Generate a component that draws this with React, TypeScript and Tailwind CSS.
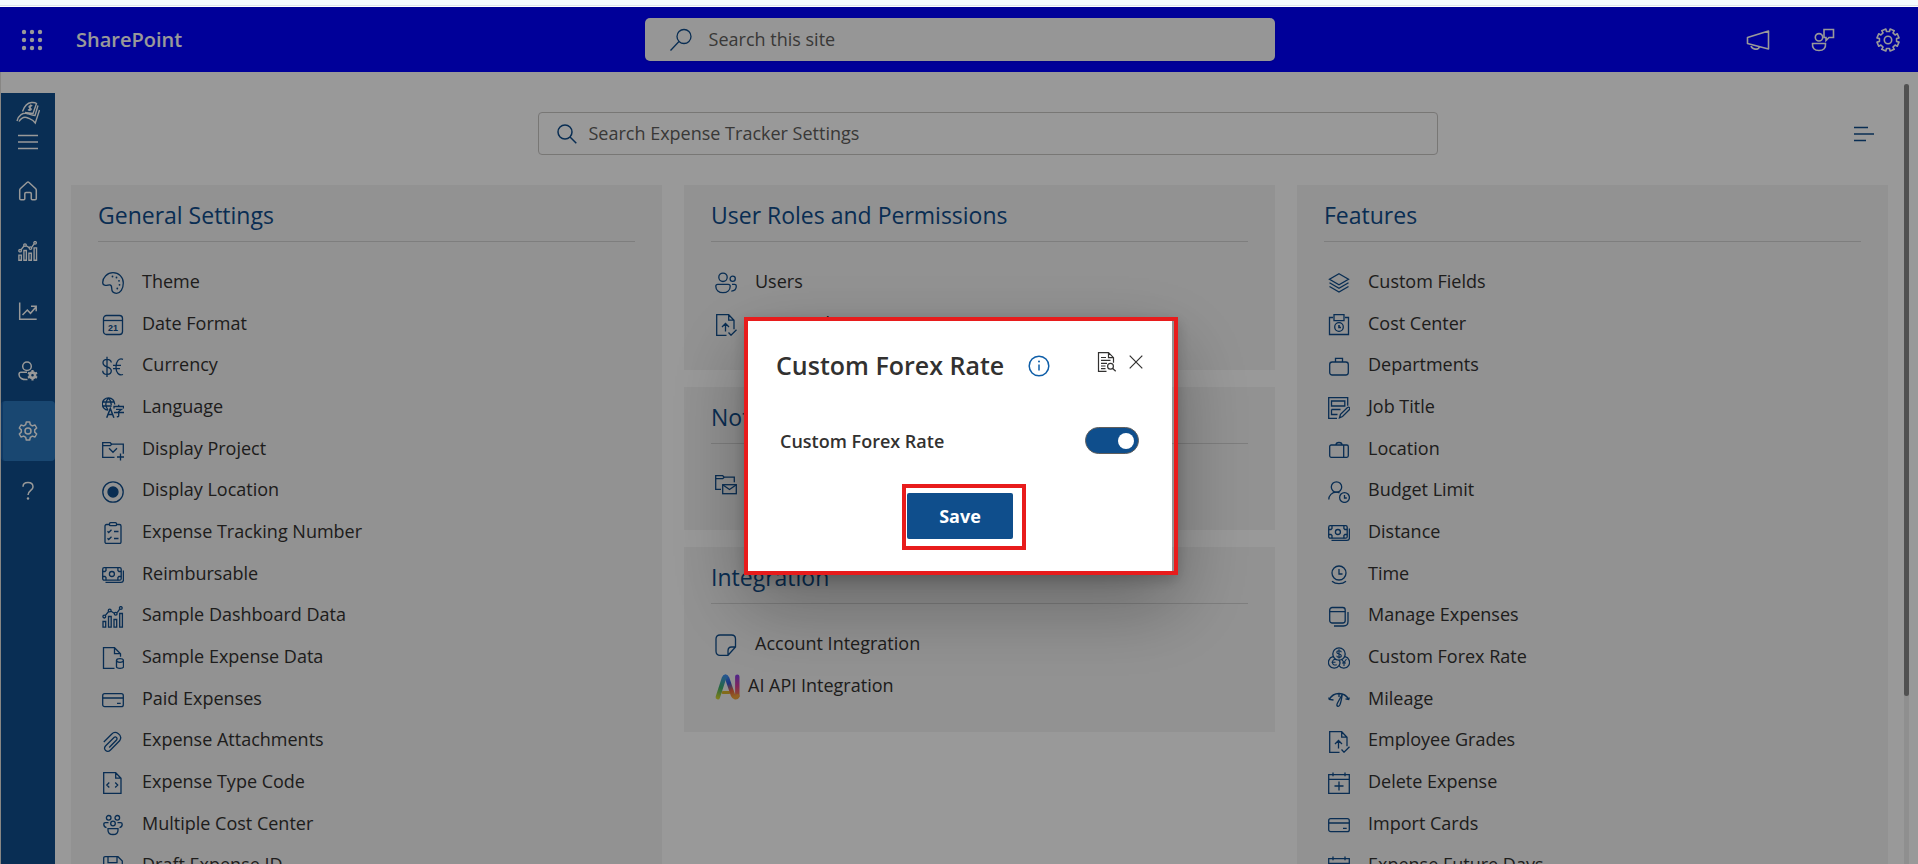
import React, { useState } from 'react';

type IconProps = { children: React.ReactNode; size?: number; className?: string; width?: number };

function Svg({ children, size = 22, className = '', width = 1.3 }: IconProps) {
  return (
    <svg
      aria-hidden="true"
      width={size}
      height={size}
      viewBox={`0 0 ${size} ${size}`}
      fill="none"
      stroke="currentColor"
      strokeWidth={width}
      className={`shrink-0 ${className}`}
    >
      {children}
    </svg>
  );
}

const dot = (cx: number, cy: number, r = 0.9) => <circle key={`${cx}-${cy}`} cx={cx} cy={cy} r={r} fill="currentColor" stroke="none" />;

const palette = (
  <Svg>
    <path d="M11 .7C16.800 .7 21.300 5 21.300 11s-3 10.300-6.800 10.300c-3 0-4.800-2-4.800-5 0-2.300-.6-3.500-2-3.500-1.500 0-2.700.9-4.500.6C1.500 13.100.7 12.300.7 10.500.7 5.500 5.300.7 11 .7Z" />
    {[dot(10.500, 4.500), dot(14.500, 5.500), dot(17, 8.800), dot(17.500, 12.800), dot(15.300, 16.500)]}
  </Svg>
);
const calendar21 = (
  <Svg>
    <rect x="1.500" y="1.500" width="19" height="19" rx="3" />
    <path d="M1.500 6.500h19" />
    <text x="11" y="16.500" textAnchor="middle" fontSize="9" fontWeight="700" fill="currentColor" stroke="none" className="font-['Liberation_Sans',sans-serif]">21</text>
  </Svg>
);
const currency = (
  <Svg>
    <path d="M9.300 6.500C9 4.300 7.300 3.300 5 3.300S1 4.500 1 6.700c0 2.500 1.800 3.400 4 4.100s4.300 1.600 4.300 4c0 2.300-1.800 3.600-4.300 3.600S.8 17.200.7 14.700M5 .7v20.300" />
    <path d="M21 3.300C17 1.800 14 5 14 11s3 9 7 7.500M11 9.300h8M11 12.700h7" />
  </Svg>
);
const language = (
  <Svg>
    <path d="M12.700 7.500V7A6.200 6.200 0 1 0 6 13.200M.5 5h12M.7 9h9M6.500 1C3 4.500 3 9.500 6 13M6.500 1c2 2 2.800 4.200 2.700 7" />
    <path d="M4.700 20.700 8.300 11.500l3.600 9.200M6 17.500h4.700" strokeWidth="1.500" />
    <path d="M12 11.500V9.500h9.500v2M14 12.300h5.500l-2.800 2.200v4.300c0 .9-.6 1-1.900.9M12 15.500h10M16.700 7.700v1.800" />
  </Svg>
);
const folderCheck = (
  <Svg>
    <path d="M12.500 18.300H.7V3.700h7.500l1.500 1.500h11.600v9.500M.7 6.700h7.500l1.500-1.500M7 9.300l4 4 4-4M18.500 14.500v7M15 18h7" />
  </Svg>
);
const radio = (
  <Svg>
    <circle cx="11" cy="11" r="10.200" />
    <circle cx="11" cy="11" r="5" fill="currentColor" />
  </Svg>
);
const checklist = (
  <Svg>
    <rect x="3" y="2.500" width="16" height="19" rx="1.500" />
    <rect x="7.500" y=".7" width="7" height="3" rx="1" fill="#f3f3f3" />
    <path d="m5.500 9.300 1.200 1.200 2.800-2.700M5.500 16.300l1.200 1.200 2.800-2.700M12 9.500h4.500M12 16.500h4.500" />
  </Svg>
);
const money = (
  <Svg>
    <rect x=".7" y="3.700" width="18.500" height="12.500" rx="1.500" />
    <circle cx="9.900" cy="10" r="2.500" />
    <path d="M.7 7.500h2.300l1-1V3.700M.7 12.500h2.300l1 1v2.700M19.200 7.500h-2.300l-1-1V3.700M19.200 12.500h-2.300l-1 1v2.700M21.400 6.500v9.500c0 1.500-.9 2.400-2.400 2.400H3.500" />
  </Svg>
);
const barPaths = (
  <>
    <path d="M1 15.500h2.700v5.700H1zM6.500 10.500h2.700v10.700H6.500zM12 13.500h2.700v7.700H12zM17.700 7.500h2.700v13.700h-2.700z" />
    <path d="m3.200 9.700 3.400-4.200M9 5.200l3.300 2M15.200 6.700l2.500-3.500" />
    <circle cx="2.300" cy="10.600" r="1.400" />
    <circle cx="7.700" cy="4.500" r="1.400" />
    <circle cx="13.700" cy="7.800" r="1.400" />
    <circle cx="18.800" cy="2" r="1.400" />
  </>
);
const bars = <Svg>{barPaths}</Svg>;
const docData = (
  <Svg>
    <path d="M12.500 21.300H1.500V.7h11l6 6v3M12.500.7v6h6" />
    <path d="M14.500 13.500v6.300c0 2 7 2 7 0v-6.300" />
    <ellipse cx="18" cy="13.500" rx="3.500" ry="1.800" />
  </Svg>
);
const card = (
  <Svg>
    <rect x=".7" y="4.700" width="20.600" height="13" rx="2" />
    <path d="M.7 9h20.600M15 14.300h3.700" />
  </Svg>
);
const clip = (
  <Svg>
    <path d="m1.800 11 8-8c3.700-4 11.300 1 8 6.500L8.500 19c-3.300 3.300-8-.5-5-4L12 6.500c1.700-1.500 4 .5 2.500 2.500l-7.300 7.500" />
  </Svg>
);
const docCode = (
  <Svg>
    <path d="M1.700.7h12l5.300 5.500v15.100H1.700zM13.700.7v5.500H19M7.300 10.500 4.800 13l2.500 2.500M13.200 10.500l2.500 2.500-2.500 2.500" />
  </Svg>
);
const team = (
  <Svg>
    <circle cx="6.700" cy="3.800" r="2.300" />
    <circle cx="15.300" cy="3.800" r="2.300" />
    <circle cx="11" cy="9.500" r="2.300" />
    <path d="M6 14.700h10v1.500c0 3-2 4.300-5 4.300s-5-1.300-5-4.300zM6.500 8.700h-3c-1.200 0-1.700.5-1.700 1.500 0 1.800 1 3 2.700 3.400M15.500 8.700h3c1.200 0 1.700.5 1.700 1.500 0 1.800-1 3-2.700 3.400" />
  </Svg>
);
const floppy = (
  <Svg>
    <path d="M1.700 2.200c0-1 .5-1.500 1.500-1.500H16l4.300 4.300v15.300H1.700zM6 .7v6h9v-6M5.500 20.300V12.500h11v7.800" />
  </Svg>
);
const people = (
  <Svg>
    <circle cx="8" cy="5.300" r="4.200" />
    <circle cx="17.700" cy="6.800" r="2.600" />
    <path d="M.8 14.300c0-1.200.8-2 2-2h10.400c1.200 0 2 .8 2 2 0 4-3 6.400-7.200 6.400S.8 18.300.8 14.300ZM17 12.300h2.500c1.100 0 1.800.7 1.800 1.800 0 3.200-2 5-5 5" />
  </Svg>
);
const docUp = (
  <Svg>
    <path d="M11.500 21.300H1.700V.7h12l5.300 5.500v9M13.700.7v5.500H19M10.500 17.500v-8M7 13l3.500-3.500L14 13M13.500 18.500l2.500 2.700 5.500-5.500" />
  </Svg>
);
const folderMail = (
  <Svg>
    <path d="M6 15.300H.7V1.700h7l1.500 1.500h10.100v5M.7 4.700h7l1.500-1.500" />
    <rect x="7.700" y="10.700" width="13.600" height="9" />
    <path d="m8 11 6.500 4.500L21 11" />
  </Svg>
);
const note = (
  <Svg>
    <path d="M13 21.300H5c-2.500 0-4-1.500-4-4V5c0-2.500 1.500-4 4-4h11.500c2.500 0 4 1.500 4 4v8L13 21.300Zm0 0V17c0-2.500 1-4 3.500-4h4" />
  </Svg>
);
const aiLogo = (
  <svg aria-hidden="true" width="25" height="26" viewBox="0 0 25 26" fill="none" strokeLinecap="round" strokeLinejoin="round" strokeWidth="4.400" className="shrink-0">
    <defs>
      <linearGradient id="ai-left" x1="9" y1="1" x2="2" y2="24" gradientUnits="userSpaceOnUse">
        <stop stopColor="#3d8ff2" />
        <stop offset=".55" stopColor="#3fae6b" />
        <stop offset="1" stopColor="#cfd32e" />
      </linearGradient>
      <linearGradient id="ai-mid" x1="10" y1="2" x2="19" y2="23" gradientUnits="userSpaceOnUse">
        <stop stopColor="#3d8ff2" />
        <stop offset=".35" stopColor="#3159d8" />
        <stop offset=".7" stopColor="#e8643c" />
        <stop offset="1" stopColor="#f2a33a" />
      </linearGradient>
      <linearGradient id="ai-right" x1="22" y1="2" x2="22" y2="23" gradientUnits="userSpaceOnUse">
        <stop stopColor="#8a3fe0" />
        <stop offset=".5" stopColor="#d93f94" />
        <stop offset="1" stopColor="#f28a3a" />
      </linearGradient>
    </defs>
    <path d="M8 18.500h6" stroke="#d9b52c" strokeWidth="3" />
    <path d="M22.300 2.700v19.500" stroke="url(#ai-right)" />
    <path d="M10.500 2.700c.8 0 1.300.6 1.600 1.300L18 21.300c.8 2.200 3.600 2.700 4.300.7" stroke="url(#ai-mid)" />
    <path d="M2.800 23.200 9 4c.3-.8.8-1.300 1.500-1.300" stroke="url(#ai-left)" />
  </svg>
);
const layers = (
  <Svg>
    <path d="m11 1.700 9.500 5.500-9.500 5.500-9.500-5.500zM1.500 10.700l9.500 5.500 9.500-5.500M1.500 14.500 11 20l9.500-5.500" />
  </Svg>
);
const badge = (
  <Svg>
    <path d="M5 3.500H1.500v17h19v-17H17M6 .7h10v6H6z" />
    <circle cx="11" cy="13" r="4.300" />
    <path d="M11 11v2.500h2" strokeWidth="1.600" />
  </Svg>
);
const briefcase = (
  <Svg>
    <rect x="1.700" y="6" width="18.600" height="13" rx="2.500" />
    <path d="M7.500 6V2.300h7V6" />
  </Svg>
);
const formEdit = (
  <Svg>
    <path d="M9 21.300H.7V.7h19v8M3.500 4h13.300v5H3.500zM3.500 12.500h9M3.500 12.500v5h6" />
    <path d="m11.500 20.800 1-3.500 7-6.800c1.500-1 3 .8 2 2l-7 7z" />
  </Svg>
);
const suitcase = (
  <Svg>
    <rect x="1.700" y="6" width="18.600" height="12.300" rx="1.500" />
    <path d="M8 6c0-2 .8-2.500 3-2.500S14 4 14 6M15.700 6v12.300" />
  </Svg>
);
const personClock = (
  <Svg>
    <circle cx="8.500" cy="6" r="5.200" />
    <path d="M.8 18.500c0-4 3-7.300 7.700-7.300 1.300 0 2.200.2 3 .6" />
    <circle cx="16.500" cy="16.500" r="4.900" />
    <path d="M16.500 14v3h2.300" />
  </Svg>
);
const clock = (
  <Svg>
    <circle cx="11" cy="9" r="7" />
    <path d="M11 5v5h3.500M4 17.300c3.800 3.200 10.200 3.200 14 0" />
  </Svg>
);
const windows = (
  <Svg>
    <rect x="1.700" y="1.500" width="15.500" height="15.500" rx="2.500" />
    <path d="M1.700 5.700h15.500M20 6v9.500c0 3-1.500 4.500-4.500 4.500H6" />
  </Svg>
);
const coins = (
  <Svg>
    <circle cx="11" cy="7" r="6.200" />
    <path d="M5 9.700a5.800 5.800 0 1 0 6 9 5.800 5.800 0 1 0 6-9M11 18.700c1.200-1.700 1.200-4 0-5.700" />
    <path d="M13.200 5.300c0-1-.8-1.600-2.200-1.600s-2.200.6-2.200 1.600 1 1.500 2.200 1.700 2.300.7 2.300 1.800-1 1.600-2.300 1.600-2.200-.6-2.300-1.600M11 2.300v9.300M8.800 12.700c-3-1-4.300.5-4.300 2.500s1.300 3.500 4.300 2.500M3.500 15.200h4M13.500 12l2.500 3.500 2.500-3.500M16 15.500V19M14 16h4" strokeWidth="1.100" />
  </Svg>
);
const gauge = (
  <Svg>
    <path d="M1.300 10.500C5.500 2.500 16.500 2.500 20.700 10.500M.7 8.500l.6 2 4.200.5M21.300 8.500l-.6 2-3.200-.7M11 4.700V8M14.300 5.200 9.500 14c-1.800 3.500 1 4.200 2.300 2 1-2 1.800-6 2.500-10.800" />
  </Svg>
);
const calendarPlus = (
  <Svg>
    <path d="M.7 2.700h20.600v18.600H.7zM.7 7.300h20.600M5 .5v3.700M17 .5v3.700M11 9.500v9M6.500 14h9" />
  </Svg>
);

const gearPath = (size: number) => {
  const c = size / 2;
  const teeth = 8;
  const outer = size / 2 - 0.8;
  const inner = outer - 2.5;
  const points: string[] = [];
  for (let i = 0; i < teeth; i += 1) {
    const mid = ((i + 0.5) / teeth) * Math.PI * 2;
    [
      [inner, -0.22],
      [outer, -0.2],
      [outer, 0.2],
      [inner, 0.22],
    ].forEach(([r, a]) => points.push(`${(c + r * Math.cos(mid + a)).toFixed(2)} ${(c + r * Math.sin(mid + a)).toFixed(2)}`));
  }
  return `M${points.join('L')}Z`;
};

const home = (
  <Svg size={20} width={1.500}>
    <path d="M1.700 9.300c0-.8.3-1.300.8-1.800l6.500-6c.7-.6 1.300-.6 2 0l6.500 6c.5.500.8 1 .8 1.800v8.200c0 .8-.5 1.300-1.300 1.300h-2.700c-.7 0-1-.4-1-1v-5c0-.8-.4-1.200-1.200-1.200H8c-.8 0-1.200.4-1.200 1.200v5c0 .6-.3 1-1 1H3c-.8 0-1.300-.5-1.300-1.300z" />
  </Svg>
);
const trend = (
  <Svg size={20} width={1.500}>
    <path d="M1.700 1.500v16.700h17M4.500 14l4.800-5 3.200 3.300 5.700-6.500M13 5.200h5.200v5" />
  </Svg>
);
const personGear = (
  <Svg size={20} width={1.500}>
    <circle cx="9" cy="5.200" r="4.300" />
    <path d="M9.500 18.500C4.500 19 1 17 1 13.500c0-1.500.8-2.200 2-2.200h6" />
    <circle cx="14.500" cy="14.200" r="2.600" strokeWidth="2.600" />
    <path d="M14.500 9v2M14.500 17.500v2M10 11.600l1.700 1M17.300 15.800l1.700 1M19 11.600l-1.700 1M11.700 15.800l-1.700 1" strokeWidth="2.200" />
  </Svg>
);
const sideGear = (
  <Svg size={20} width={1.500}>
    <circle cx="10" cy="10" r="3" />
    <path strokeLinejoin="round" d="M8.300 1h3.400l.6 2.700 2 1.200 2.700-.9 1.700 3-2 1.900v2.200l2 1.900-1.700 3-2.700-.9-2 1.200-.6 2.700H8.300l-.6-2.700-2-1.200L3 16l-1.700-3 2-1.900V8.900L1.300 7 3 4l2.700.9 2-1.200z" />
  </Svg>
);
const help = (
  <Svg size={20} width={1.500}>
    <path d="M5 5.700C5 3 7 1.500 10 1.500s5 1.700 5 4.400c0 3.500-5 3.600-5 8.100" />
    {dot(10, 17.500, 1.200)}
  </Svg>
);
const dashboard = (
  <svg aria-hidden="true" width="20" height="20" viewBox="0 0 22 22" fill="none" stroke="currentColor" strokeWidth="1.500" className="shrink-0">
    {barPaths}
  </svg>
);

const generalItems = [
  ['Theme', palette],
  ['Date Format', calendar21],
  ['Currency', currency],
  ['Language', language],
  ['Display Project', folderCheck],
  ['Display Location', radio],
  ['Expense Tracking Number', checklist],
  ['Reimbursable', money],
  ['Sample Dashboard Data', bars],
  ['Sample Expense Data', docData],
  ['Paid Expenses', card],
  ['Expense Attachments', clip],
  ['Expense Type Code', docCode],
  ['Multiple Cost Center', team],
  ['Draft Expense ID', floppy],
] as const;

const featureItems = [
  ['Custom Fields', layers],
  ['Cost Center', badge],
  ['Departments', briefcase],
  ['Job Title', formEdit],
  ['Location', suitcase],
  ['Budget Limit', personClock],
  ['Distance', money],
  ['Time', clock],
  ['Manage Expenses', windows],
  ['Custom Forex Rate', coins],
  ['Mileage', gauge],
  ['Employee Grades', docUp],
  ['Delete Expense', calendarPlus],
  ['Import Cards', card],
  ['Expense Future Days', calendarPlus],
] as const;

type Items = readonly (readonly [string, React.ReactNode])[];

function Panel({ title, items }: { title: string; items: Items }) {
  return (
    <section className="bg-[#f3f3f3] px-[27px] pt-3 pb-[26px]">
      <h2 className="h-[45px] border-b border-[#d2d2d2] text-[23px] leading-[36px] text-[#0f4c8a]">{title}</h2>
      <ul className="mt-[18px]">
        {items.map(([label, icon]) => (
          <li key={label} className="h-[42px] nth-[3n]:h-[41px]">
            <a
              href="#"
              className={`flex h-full items-center pl-1 text-[18px] text-[#323130] ${label.startsWith('AI') ? 'gap-2' : 'gap-[18px]'}`}
            >
              <span className="mt-1 text-[#0f4c8a]">{icon}</span>
              {label}
            </a>
          </li>
        ))}
      </ul>
    </section>
  );
}

const navItems = [
  ['Home', home],
  ['Dashboard', dashboard],
  ['Reports', trend],
  ['User access', personGear],
  ['Settings', sideGear],
  ['Help', help],
] as const;

function Sidebar() {
  return (
    <nav className="mt-[21px] flex w-[54px] shrink-0 flex-col items-stretch bg-[#0f4e8c] text-white">
      <div className="flex h-10 items-center justify-center">
        <Svg size={24} width={1.400}>
          <path d="M1 20C2.500 14 7 11.500 11 12.500c3 1 5.500 2 8 2L22 4.500M3 20.500c2.500-4 6-5 9-3.500 3 1.300 5 1.500 7.300 5L23.500 9M6.500 10.500C8 6 11 2 15.500 1.500c2-.2 4 .2 5 1L17 12.500c-2.500.2-5-1-8-1" />
          <path d="M16.300 5c-1-.8-3.300-.5-3.300.8 0 1.500 2.500 1 2.200 2.500-.3 1.200-2.300 1.200-3.200.3M15 3.500l-1.800 6.300" />
        </Svg>
      </div>
      <button type="button" aria-label="Toggle menu" className="mb-[10px] flex h-[18px] items-center justify-center">
        <Svg size={20} width={1.600}>
          <path d="M0 3.500h20M0 10h20M0 16.500h20" />
        </Svg>
      </button>
      {navItems.map(([label, icon]) => (
        <a
          key={label}
          href="#"
          aria-label={label}
          className={`flex h-[60px] items-center justify-center ${label === 'Settings' ? 'rounded-sm border-l-2 border-[#1a5fa8] bg-[#2a77bd] pr-0.5' : ''}`}
        >
          {icon}
        </a>
      ))}
    </nav>
  );
}

function Header() {
  return (
    <header className="flex h-[65px] shrink-0 items-center bg-[#0000ff] pr-[15px] pl-5 text-white">
      <div className="flex flex-1 items-center gap-8">
        <button type="button" aria-label="App launcher">
          <Svg size={24}>{[4, 12, 20].map((y) => [4, 12, 20].map((x) => dot(x, y, 2.200)))}</Svg>
        </button>
        <a href="#" className="text-[20px] font-semibold">SharePoint</a>
      </div>
      <label className="flex h-[43px] w-[33.5%] items-center gap-4 rounded-[5px] bg-[#fafafa] pl-6 text-[#0f4c8a] shadow">
        <Svg size={24}>
          <circle cx="15" cy="8.500" r="7" />
          <path d="M10 13.500 1.500 22.500" />
        </Svg>
        <input aria-label="Search this site" placeholder="Search this site" className="min-w-0 flex-1 bg-transparent text-[18px] outline-none placeholder:text-[#605e5c]" />
      </label>
      <div className="flex flex-1 items-center justify-end gap-[41px] pr-[3px]">
        <button type="button" aria-label="Announcements">
          <Svg size={24} width={1.600}>
            <path d="M22.500 3v18L1.500 15.500v-6zM5 16.500c0 5.500 8 6 8.500 2.200" strokeLinejoin="round" />
          </Svg>
        </button>
        <button type="button" aria-label="Feedback">
          <Svg size={24} width={1.600}>
            <path d="M13 1.500h9.500v8H18l-3 3v-3h-2zM1.500 15.500h13c.5 4.500-2 7-6.500 7s-7-2.500-6.500-7Z" />
            <circle cx="8" cy="9.300" r="3.700" />
          </Svg>
        </button>
        <button type="button" aria-label="Site settings">
          <Svg size={24} width={1.600}>
            <path d={gearPath(24)} strokeLinejoin="round" />
            <circle cx="12" cy="12" r="3.700" />
          </Svg>
        </button>
      </div>
    </header>
  );
}

function ForexDialog() {
  const [enabled, setEnabled] = useState(true);
  return (
    <div className="w-[434px] border-4 border-[#e81c1c] pr-[2px] shadow-[0_30px_70px_rgba(0,0,0,0.3),0_5px_14px_rgba(0,0,0,0.2)]">
      <div role="dialog" aria-labelledby="forex-title" className="h-[250px] bg-white pt-6 pr-[33px] pl-7 text-[#323130]">
        <div className="flex items-start">
          <h1 id="forex-title" className="text-[25px] leading-[40px] font-semibold">Custom Forex Rate</h1>
          <button type="button" aria-label="Information" className="mt-[10px] ml-6 text-[#0f5ea8]">
            <Svg width={1.500}>
              <circle cx="11" cy="11" r="9.800" />
              <path d="M11 9.500v6" />
              {dot(11, 6.500, 1)}
            </Svg>
          </button>
          <div className="mt-[7px] -mr-1 ml-auto flex items-center gap-3">
            <button type="button" aria-label="View log">
              <Svg size={20} width={1.200}>
                <path d="M9.500 19.300H1.500V.7h10l5 5v5M11.500.7v5h5M4 5.500h5M4 8.300h9.500M4 11.300h6M4 14h4.500M4 16.700h4.500" />
                <circle cx="13.500" cy="14.300" r="2.900" />
                <path d="m15.700 16.500 3 2.800" />
              </Svg>
            </button>
            <button type="button" aria-label="Close">
              <Svg size={14} width={1.200}>
                <path d="m.7.7 12.600 12.600M13.300.7.7 13.300" />
              </Svg>
            </button>
          </div>
        </div>
        <div className="mt-[42px] flex items-center justify-between pl-1">
          <label htmlFor="forex-switch" className="text-[18px] leading-7 font-semibold">Custom Forex Rate</label>
          <button
            id="forex-switch"
            type="button"
            role="switch"
            aria-checked={enabled}
            onClick={() => setEnabled(!enabled)}
            className={`flex h-[27px] w-[54px] items-center rounded-full border border-[#605e5c] px-1 ${enabled ? 'justify-end bg-[#0f4e8c]' : 'justify-start bg-[#a19f9d]'}`}
          >
            <span className="size-4 rounded-full bg-white" />
          </button>
        </div>
        <div className="mt-[29px] ml-[126px] h-[66px] w-[124px] border-4 border-[#e81c1c] pt-[5px] pl-px">
          <button type="button" className="h-[46px] w-[106px] rounded-xs bg-[#0f4e8c] pt-0.5 text-[18px] font-bold text-white">Save</button>
        </div>
      </div>
    </div>
  );
}

export default function App() {
  return (
    <div className="flex h-screen flex-col overflow-hidden bg-white font-['Open_Sans','Noto_Sans',sans-serif]">
      <div className="h-[6px] shrink-0 border-b border-[#dde4ea] bg-[#f5fafe]" />
      <div className="h-px shrink-0" />
      <Header />
      <div className="flex min-h-0 flex-1 border-l border-[#e1dfdd]">
        <Sidebar />
        <main className="min-w-0 flex-1 overflow-hidden pt-10">
          <div className="grid grid-cols-[1fr_minmax(0,900px)_1fr] items-center pl-4">
            <label className="col-start-2 flex h-[43px] items-center gap-3 rounded-sm border border-[#c8c6c4] pl-[18px] text-[#0f4c8a]">
              <Svg size={20} width={1.500}>
                <circle cx="8" cy="8" r="7" />
                <path d="m13 13 6.300 6.300" />
              </Svg>
              <input
                aria-label="Search Expense Tracker Settings"
                placeholder="Search Expense Tracker Settings"
                className="min-w-0 flex-1 bg-transparent text-[18px] outline-none placeholder:text-[#605e5c]"
              />
            </label>
            <button type="button" aria-label="Filter" className="mr-[30px] justify-self-end text-[#0f4c8a]">
              <Svg size={20} width={1.600}>
                <path d="M0 3.500h14M0 10h20M0 16.500h12" />
              </Svg>
            </button>
          </div>
          <div className="mt-[30px] grid grid-cols-3 items-start gap-[22px] pr-4 pl-4">
            <Panel title="General Settings" items={generalItems} />
            <div className="flex flex-col gap-[17px]">
              <Panel title="User Roles and Permissions" items={[['Users', people], ['Approvals', docUp]]} />
              <Panel title="Notifications" items={[['Email Notifications', folderMail]]} />
              <Panel title="Integration" items={[['Account Integration', note], ['AI API Integration', aiLogo]]} />
            </div>
            <Panel title="Features" items={featureItems} />
          </div>
        </main>
        <div className="mt-3 mr-[9px] w-[5px] shrink-0 bg-[#efefef]">
          <div className="h-[78.5%] rounded-full bg-[#878787]" />
        </div>
      </div>
      <div className="fixed inset-x-0 top-[7px] bottom-0 flex items-center justify-center bg-black/40 pt-5 pl-1">
        <ForexDialog />
      </div>
    </div>
  );
}
